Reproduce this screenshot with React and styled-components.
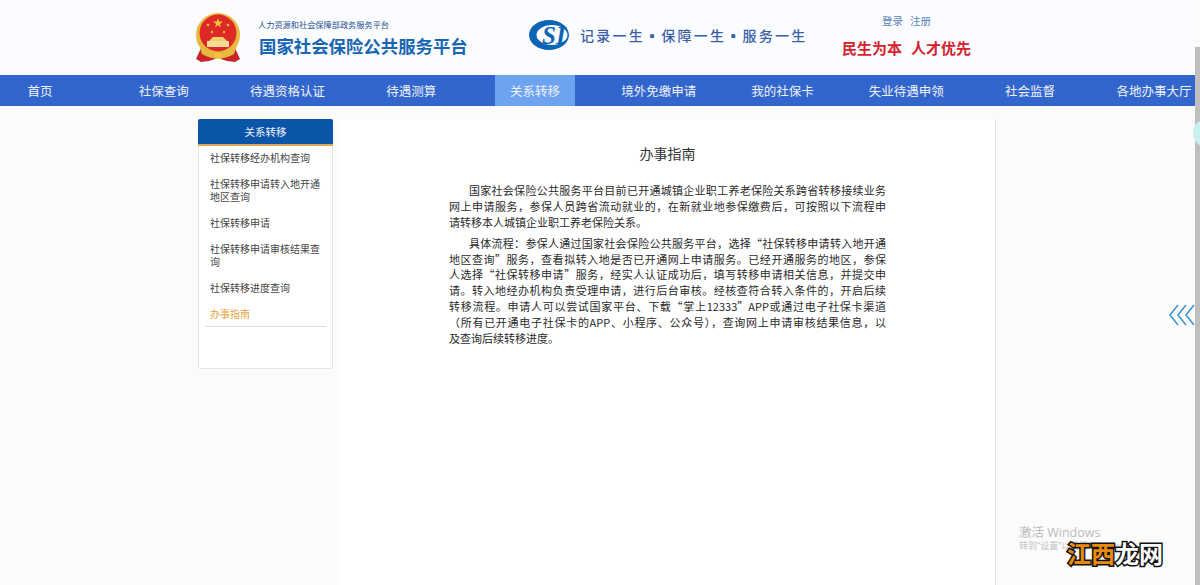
import styled, { createGlobalStyle } from 'styled-components';

const GlobalStyle = createGlobalStyle`
  html, body {
    margin: 0;
    padding: 0;
    height: 585px;
    overflow: hidden;
    background: #fbfbfb;
    font-family: "Liberation Sans", "Noto Sans CJK SC", sans-serif;
  }
`;

const Shell = styled.div`
  position: relative;
  display: flex;
  width: 1200px;
  height: 585px;
  overflow: hidden;
`;

const Page = styled.div`
  width: 1195px;
  flex-shrink: 0;
`;

const ScrollTrack = styled.div`
  flex: 1;
  margin-top: 47px;
  background: #bfbfbf;
  z-index: 2;
`;

const Header = styled.header`
  height: 75px;
  background: #fbfcff;
  display: flex;
  align-items: center;
  padding-left: 195px;
  box-sizing: border-box;
`;

const Brand = styled.div`
  margin-left: 18px;
  width: 270px;
  display: flex;
  flex-direction: column;
  gap: 4px;
  padding-top: 2px;
`;

const BrandTop = styled.div`
  font-size: 8.2px;
  line-height: 12px;
  margin-left: -1px;
  color: #25508c;
`;

const BrandTitle = styled.div`
  font-size: 17.4px;
  line-height: 22px;
  font-weight: 700;
  color: #1766b2;
`;

const SloganWrap = styled.div`
  display: flex;
  align-items: center;
  gap: 10px;
  width: 313px;
  padding-bottom: 5px;
`;

const Slogan = styled.div`
  font-family: "Noto Sans CJK SC", sans-serif;
  font-size: 14px;
  font-weight: 500;
  letter-spacing: 2.25px;
  color: #3a5fa8;
  white-space: nowrap;
`;

const UserBlock = styled.div`
  display: flex;
  flex-direction: column;
  gap: 11px;
  padding-bottom: 5px;
`;

const LoginRow = styled.div`
  font-size: 10.5px;
  line-height: 14px;
  padding-left: 40px;
  color: #5a84b4;
  display: flex;
  gap: 7px;
`;

const RedMotto = styled.div`
  font-family: "Noto Sans CJK SC", sans-serif;
  font-size: 15px;
  line-height: 18px;
  font-weight: 700;
  color: #d3232c;
  white-space: nowrap;
  display: flex;
  gap: 9px;
`;

const Nav = styled.nav`
  height: 31px;
  padding-right: 1px;
  background: #3366cc;
  display: flex;
  justify-content: space-between;
`;

const NavItem = styled.a`
  width: 80px;
  display: flex;
  align-items: center;
  justify-content: center;
  font-size: 12.5px;
  white-space: nowrap;
  color: #eef2fb;
  background: ${(p) => (p.$active ? '#6ea3f0' : 'transparent')};
`;

const Body = styled.div`
  display: flex;
  align-items: flex-start;
  gap: 7px;
  padding: 13px 0 0 198px;
`;

const Side = styled.aside`
  width: 135px;
  height: 250px;
  background: #fff;
  box-sizing: border-box;
  border-radius: 2px;
  border: 1px solid #e6e6e6;
  border-top: 0;
`;

const SideHead = styled.div`
  height: 25px;
  margin: 0 -1px;
  background: #0a55a8;
  border-bottom: 2px solid #e0a652;
  border-radius: 2px 2px 0 0;
  color: #eef3fa;
  font-size: 10.5px;
  display: flex;
  align-items: center;
  justify-content: center;
`;

const SideList = styled.div`
  margin: 6px 6px 0;
  padding: 0 0 5px 5px;
  border-bottom: 1px solid #dcdcdc;
  display: flex;
  flex-direction: column;
  gap: 13px;
`;

const SideLink = styled.a`
  width: 112px;
  font-size: 10px;
  line-height: 13px;
  color: ${(p) => (p.$active ? '#e2a33a' : '#444')};
`;

const Card = styled.main`
  width: 656px;
  height: 466px;
  background: #fff;
  border-right: 1px solid #e4e4e4;
  padding: 26px 109px 0;
  box-sizing: border-box;
`;

const Title = styled.h1`
  margin: 0 0 20px;
  text-align: center;
  font-size: 14px;
  line-height: 18px;
  font-weight: 400;
  color: #333;
`;

const Para = styled.div`
  margin-bottom: 5px;
  font-family: "Noto Sans CJK SC", sans-serif;
  font-size: 11px;
  line-height: 15.9px;
  color: #2a2a2a;
`;

// each line is set full width, the reference breaks them at these exact places
const Line = styled.div`
  height: 15.9px;
  text-align: justify;
  text-align-last: ${(p) => (p.$last ? 'left' : 'justify')};
  text-justify: inter-character;
  padding-left: ${(p) => (p.$first ? '20px' : '0')};
`;

const Orb = styled.div`
  position: absolute;
  left: 1193px;
  top: 119px;
  width: 28px;
  height: 28px;
  border-radius: 50%;
  background: #c9f0ee;
  z-index: 3;
`;

const Arrows = styled.svg`
  position: absolute;
  left: 1169px;
  top: 304px;
`;

const Watermark = styled.div`
  position: absolute;
  left: 1019px;
  top: 525px;
  color: #bcbcbc;
  font-family: "Open Sans", "Noto Sans CJK SC", sans-serif;
  font-size: 12.5px;
  line-height: 15px;
`;

const WatermarkSub = styled.div`
  font-size: 9px;
  line-height: 11px;
  color: #c4c4c4;
`;

const SiteMark = styled.div`
  position: absolute;
  left: 1067px;
  top: 541px;
  font-size: 24px;
  line-height: 28px;
  font-weight: 700;
  white-space: nowrap;
  color: #fff;
  -webkit-text-stroke: 3px #111;
  paint-order: stroke fill;
`;

const SiteMarkOrange = styled.span`
  color: #e98a0e;
`;

const Emblem = () => (
  <svg width="46" height="52" viewBox="0 0 46 52">
    <path d="M6 36 L1 47 L6 50 L14 49 L23 46 L32 49 L40 50 L45 47 L40 36 Z" fill="#c9262b" />
    <circle cx="23" cy="23" r="22" fill="#e8b93f" />
    <circle cx="23" cy="21" r="18.5" fill="#dd2a26" />
    <path d="M23 6 l1.2 3.6 3.8 0 -3.1 2.3 1.2 3.6 -3.1 -2.2 -3.1 2.2 1.2 -3.6 -3.1 -2.3 3.8 0 z" fill="#f2c33f" />
    <circle cx="13" cy="13" r="1.3" fill="#f2c33f" />
    <circle cx="33" cy="13" r="1.3" fill="#f2c33f" />
    <circle cx="17" cy="20" r="1.2" fill="#f2c33f" />
    <circle cx="29" cy="20" r="1.2" fill="#f2c33f" />
    <path d="M14 29 L18 25 H28 L32 29 Z" fill="#f4cf6a" />
    <rect x="12" y="29" width="22" height="6" fill="#f6dc94" />
    <path d="M5 36 Q23 46 41 36 L39 42 Q23 51 7 42 Z" fill="#e8b93f" />
    <rect x="20" y="41" width="6" height="6" fill="#f2c33f" />
  </svg>
);

const SiLogo = () => (
  <svg width="41" height="32" viewBox="0 0 41 32">
    <path
      fillRule="evenodd"
      fill="#0f65b5"
      d="M20 1 C31 1 40 7.7 40 16 C40 24.3 31 31 20 31 C9 31 0 24.3 0 16 C0 7.7 9 1 20 1 Z M23 6 C14.5 6 7.5 10.5 7.5 16 C7.5 21.5 14.5 26 23 26 C31.5 26 38.5 21.5 38.5 16 C38.5 10.5 31.5 6 23 6 Z"
    />
    <text x="13" y="25" fontFamily="Liberation Serif, serif" fontStyle="italic" fontWeight="700" fontSize="25" fill="#0f65b5">SI</text>
  </svg>
);

const navItems = ['首页', '社保查询', '待遇资格认证', '待遇测算', '关系转移', '境外免缴申请', '我的社保卡', '失业待遇申领', '社会监督', '各地办事大厅'];

const sideItems = ['社保转移经办机构查询', '社保转移申请转入地开通地区查询', '社保转移申请', '社保转移申请审核结果查询', '社保转移进度查询', '办事指南'];

const paragraphs = [
  [
    '国家社会保险公共服务平台目前已开通城镇企业职工养老保险关系跨省转移接续业务',
    '网上申请服务，参保人员跨省流动就业的，在新就业地参保缴费后，可按照以下流程申',
    '请转移本人城镇企业职工养老保险关系。',
  ],
  [
    '具体流程：参保人通过国家社会保险公共服务平台，选择“社保转移申请转入地开通',
    '地区查询”服务，查看拟转入地是否已开通网上申请服务。已经开通服务的地区，参保',
    '人选择“社保转移申请”服务，经实人认证成功后，填写转移申请相关信息，并提交申',
    '请。转入地经办机构负责受理申请，进行后台审核。经核查符合转入条件的，开启后续',
    '转移流程。申请人可以尝试国家平台、下载“掌上12333”APP或通过电子社保卡渠道',
    '（所有已开通电子社保卡的APP、小程序、公众号），查询网上申请审核结果信息，以',
    '及查询后续转移进度。',
  ],
];

export default function App() {
  return (
    <Shell>
      <GlobalStyle />
      <Page>
        <Header>
          <Emblem />
          <Brand>
            <BrandTop>人力资源和社会保障部政务服务平台</BrandTop>
            <BrandTitle>国家社会保险公共服务平台</BrandTitle>
          </Brand>
          <SloganWrap>
            <SiLogo />
            <Slogan>记录一生▪保障一生▪服务一生</Slogan>
          </SloganWrap>
          <UserBlock>
            <LoginRow>
              <span>登录</span>
              <span>注册</span>
            </LoginRow>
            <RedMotto>
              <span>民生为本</span>
              <span>人才优先</span>
            </RedMotto>
          </UserBlock>
        </Header>
        <Nav>
          {navItems.map((item) => (
            <NavItem key={item} $active={item === '关系转移'}>{item}</NavItem>
          ))}
        </Nav>
        <Body>
          <Side>
            <SideHead>关系转移</SideHead>
            <SideList>
              {sideItems.map((item) => (
                <SideLink key={item} $active={item === '办事指南'}>{item}</SideLink>
              ))}
            </SideList>
          </Side>
          <Card>
            <Title>办事指南</Title>
            {paragraphs.map((lines) => (
              <Para key={lines[0]}>
                {lines.map((line, i) => (
                  <Line key={line} $first={i === 0} $last={i === lines.length - 1}>{line}</Line>
                ))}
              </Para>
            ))}
          </Card>
        </Body>
      </Page>
      <ScrollTrack />
      <Orb />
      <Arrows width="26" height="22" viewBox="0 0 26 22" fill="none" stroke="#3f97d0" strokeWidth="1.6">
        <path d="M9 1 L1 11 L9 21" />
        <path d="M17 1 L9 11 L17 21" />
        <path d="M25 1 L17 11 L25 21" />
      </Arrows>
      <Watermark>
        激活 Windows
        <WatermarkSub>转到“设置”以激活 Windows。</WatermarkSub>
      </Watermark>
      <SiteMark>
        <SiteMarkOrange>江西</SiteMarkOrange>龙网
      </SiteMark>
    </Shell>
  );
}
